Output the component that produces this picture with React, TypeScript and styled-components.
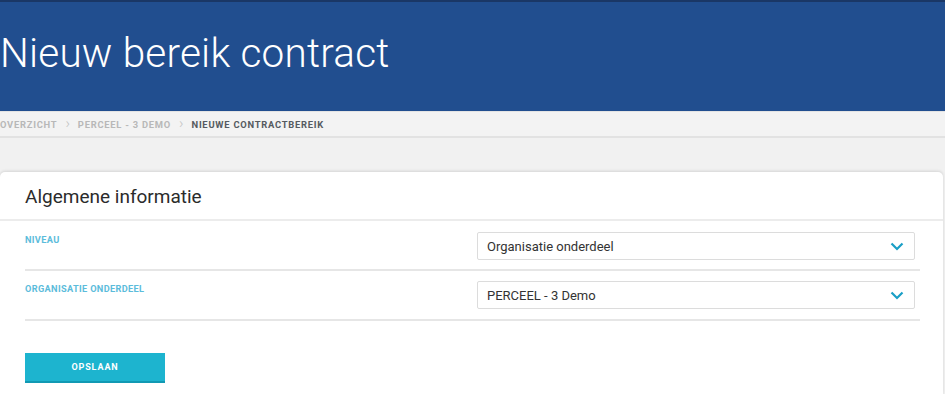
import * as React from 'react';
import styled, { createGlobalStyle } from 'styled-components';

const GlobalStyle = createGlobalStyle`
  html, body {
    margin: 0;
    padding: 0;
    background: #f1f1f1;
    font-family: Roboto, "Liberation Sans", sans-serif;
    overflow: hidden;
  }
`;

const Page = styled.div`
  width: 945px;
  height: 394px;
  background: #f1f1f1;
`;
const Banner = styled.header`
  height: 109px;
  background: #214e8f;
  border-top: 2px solid #1a3766;
  display: flex;
  align-items: center;
`;
const Title = styled.h1`
  margin: 0 0 8px 0;
  font-size: 40.5px;
  font-weight: 300;
  color: #ffffff;
  letter-spacing: 0.2px;
`;
const Crumbs = styled.nav`
  height: 24px;
  background: #f3f3f3;
  border-top: 1px solid #e4e4e4;
  border-bottom: 2px solid #e2e2e2;
  display: flex;
  align-items: center;
  gap: 8px;
`;
const Crumb = styled.span<{ $current?: boolean }>`
  font-size: 9.4px;
  font-weight: 700;
  letter-spacing: 0.75px;
  text-transform: uppercase;
  color: ${(p) => (p.$current ? '#555a60' : '#b8b8b8')};
`;
const Sep = styled.span`
  font-size: 15px;
  font-weight: 300;
  line-height: 1;
  margin-top: -2px;
  color: #c2c2c2;
`;
const Card = styled.section`
  margin: 34px 2px 0 0;
  background: #ffffff;
  border-radius: 5px 5px 0 0;
  box-shadow: 0 -1px 3px rgba(0, 0, 0, 0.12);
  height: 223px;
`;
const CardHead = styled.h2`
  margin: 0;
  padding: 13px 25px 0;
  height: 34px;
  font-size: 19px;
  font-weight: 400;
  color: #2b2b2b;
  border-bottom: 2px solid #ececec;
`;
const Fields = styled.div`
  padding: 0 23px 0 25px;
`;
const Row = styled.div`
  display: grid;
  grid-template-columns: 452px 438px;
  height: 50px;
  border-bottom: 2px solid #e6e6e6;
  padding-top: 10px;
  box-sizing: border-box;
  &:first-child {
    padding-top: 11px;
  }
`;
const Label = styled.label`
  font-size: 9.2px;
  font-weight: 700;
  letter-spacing: 0.35px;
  color: #5cbcdb;
  text-transform: uppercase;
  padding-top: 2px;
`;
const Select = styled.div`
  height: 28px;
  box-sizing: border-box;
  border: 1px solid #dcdcdc;
  border-radius: 2px;
  display: flex;
  align-items: center;
  justify-content: space-between;
  padding: 0 10px 0 9px;
  font-size: 13px;
  color: #333;
`;
const Actions = styled.div`
  padding: 32px 25px 0;
`;
const Button = styled.button`
  width: 140px;
  height: 30px;
  border: 0;
  border-bottom: 2px solid #1199b3;
  background: #1db4cf;
  color: #ffffff;
  font-family: Roboto, "Liberation Sans", sans-serif;
  font-size: 9px;
  font-weight: 700;
  letter-spacing: 0.9px;
  padding: 0;
`;

const Chevron = () => (
  <svg width="14" height="9" viewBox="0 0 14 9">
    <path d="M1.5 1.5 L7 7 L12.5 1.5" fill="none" stroke="#1a9fc6" strokeWidth="2.2" />
  </svg>
);

const App: React.FC = () => (
  <Page>
    <GlobalStyle />
    <Banner>
      <Title>Nieuw bereik contract</Title>
    </Banner>
    <Crumbs>
      <Crumb>Overzicht</Crumb>
      <Sep>›</Sep>
      <Crumb>Perceel - 3 Demo</Crumb>
      <Sep>›</Sep>
      <Crumb $current>Nieuwe contractbereik</Crumb>
    </Crumbs>
    <Card>
      <CardHead>Algemene informatie</CardHead>
      <Fields>
        <Row>
          <Label>Niveau</Label>
          <Select>
            Organisatie onderdeel
            <Chevron />
          </Select>
        </Row>
        <Row>
          <Label>Organisatie onderdeel</Label>
          <Select>
            PERCEEL - 3 Demo
            <Chevron />
          </Select>
        </Row>
      </Fields>
      <Actions>
        <Button>OPSLAAN</Button>
      </Actions>
    </Card>
  </Page>
);
export default App;
